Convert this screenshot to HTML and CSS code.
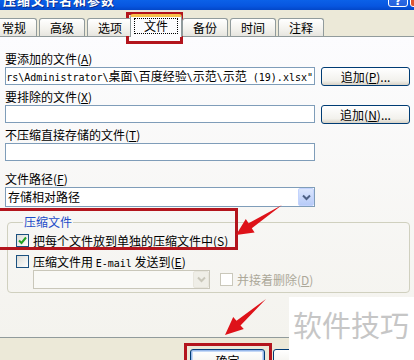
FILE: index.html
```html
<!DOCTYPE html>
<html lang="zh-CN">
<head>
<meta charset="utf-8">
<link rel="stylesheet" href="styles.css">
</head>
<body>
<div class="window">
  <div class="titlebar">
    <span class="title">压缩文件名和参数</span>
    <span class="tb-btns"><span class="tb-help">?</span><span class="tb-close"></span></span>
  </div>
  <div class="tabrow">
    <div class="tab">常规</div>
    <div class="tab">高级</div>
    <div class="tab">选项</div>
    <div class="tab active"><span class="focus">文件</span></div>
    <div class="tab">备份</div>
    <div class="tab">时间</div>
    <div class="tab">注释</div>
  </div>
  <div class="panel">
    <div class="field">
      <div class="label">要添加的文件(<u>A</u>)</div>
      <div class="row">
        <div class="input path"><span class="path-text"><span class="mono">ers\Administrator\</span>桌面<span class="mono">\</span>百度经验<span class="mono">\</span>示范<span class="mono">\</span>示范<span class="mono"> (19).xlsx"</span></span></div>
        <button class="btn">追加(<u>P</u>)...</button>
      </div>
    </div>
    <div class="field">
      <div class="label">要排除的文件(<u>X</u>)</div>
      <div class="row">
        <div class="input"></div>
        <button class="btn">追加(<u>N</u>)...</button>
      </div>
    </div>
    <div class="field wide">
      <div class="label">不压缩直接存储的文件(<u>T</u>)</div>
      <div class="row">
        <div class="input"></div>
      </div>
    </div>
    <div class="field last">
      <div class="label">文件路径(<u>F</u>)</div>
      <div class="select">
        <span class="select-text">存储相对路径</span>
        <span class="dd"><svg width="9" height="7" viewBox="0 0 9 7"><polyline points="1,1.5 4.5,5 8,1.5" fill="none" stroke="#4d6185" stroke-width="2"/></svg></span>
      </div>
    </div>
    <fieldset class="group">
      <legend>压缩文件</legend>
      <div class="cb-row">
        <span class="cb"><svg width="9" height="9" viewBox="0 0 9 9"><polyline points="1,4.5 3.5,7 8,1.5" fill="none" stroke="#21a121" stroke-width="2"/></svg></span>
        <span>把每个文件放到单独的压缩文件中(<u>S</u>)</span>
      </div>
      <div class="cb-row">
        <span class="cb"></span>
        <span>压缩文件用 <span class="mono">E-mail</span> 发送到(<u>E</u>)</span>
      </div>
      <div class="row3">
        <div class="select disabled">
          <span class="select-text"></span>
          <span class="dd"><svg width="9" height="7" viewBox="0 0 9 7"><polyline points="1,1.5 4.5,5 8,1.5" fill="none" stroke="#c9c7ba" stroke-width="2"/></svg></span>
        </div>
        <span class="cb off"></span>
        <span class="dis-text">并接着删除(<u>D</u>)</span>
      </div>
    </fieldset>
  </div>
  <div class="footer">
    <button class="btn big default">确定</button>
    <button class="btn big">取消</button>
    <button class="btn big">帮助</button>
  </div>
</div>

<div class="watermark">软件技巧</div>
<div class="mark mark-tab"></div>
<div class="mark mark-check"></div>
<div class="mark mark-ok"></div>
<svg class="arrows" width="414" height="360" viewBox="0 0 414 360">
  <polygon points="236,235 245.8,219 248.6,223.2 282,205 251.8,228.2 254.6,232.4" fill="#de1219"/>
  <polygon points="225,335 233.2,317.1 236.5,320.8 266,299 240.5,325.4 243.8,329.1" fill="#de1219"/>
</svg>
</body>
</html>
```

FILE: styles.css
```css
* { box-sizing: border-box; }

body {
  margin: 0;
  width: 414px;
  height: 360px;
  overflow: hidden;
  position: relative;
  background: #ece9d8;
  font-family: "Noto Sans CJK SC", sans-serif;
  font-size: 12px;
  color: #000;
}

/* title bar */
.titlebar {
  height: 10px;
  display: flex;
  align-items: flex-end;
  overflow: hidden;
  background: linear-gradient(#0b61e8, #0756e0 60%, #0347c8);
}
.title {
  color: #fff;
  font-weight: bold;
  font-size: 13px;
  letter-spacing: 1px;
  line-height: 14px;
  margin: 0 0 3px 3px;
  text-shadow: 1px 1px 0 #0b2d8a;
  white-space: nowrap;
}
.tb-btns {
  margin-left: auto;
  margin-right: -17px;
  margin-bottom: 3px;
  display: flex;
  align-items: flex-end;
  gap: 2px;
}
.tb-help {
  width: 20px;
  height: 20px;
  border: 1px solid #fff;
  border-radius: 3px;
  background: linear-gradient(#3c80f4, #2460dc);
  color: #fff;
  font: bold 12px "DejaVu Sans", sans-serif;
  line-height: 26px;
  text-align: center;
}
.tb-close {
  width: 21px;
  height: 20px;
  border: 1px solid #fff;
  border-radius: 3px;
  background: #e0562f;
}

/* tabs */
.tabrow {
  height: 26px;
  display: flex;
  align-items: flex-end;
  gap: 2px;
  margin-left: -9px;
  position: relative;
  z-index: 1;
}
.tab {
  width: 46px;
  height: 18px;
  flex: none;
  border: 1px solid #919b9c;
  border-bottom: 0;
  border-radius: 3px 3px 0 0;
  background: linear-gradient(#fff, #f3f2ed 60%, #e6e5df);
  text-align: center;
  line-height: 17px;
}
.tab.active {
  width: 52px;
  height: 23px;
  margin: 0 -2px -1px -5px;
  border-top: 3px solid #f9c34a;
  background: #fcfcfe;
  padding-top: 1px;
  line-height: 14px;
}
.focus {
  display: inline-block;
  border: 1px dotted #000;
  padding: 0 9px;
  line-height: 14px;
}

/* panel */
.panel {
  height: 302px;
  border-top: 1px solid #919b9c;
  border-bottom: 1px solid #919b9c;
  background: linear-gradient(#fcfcfe, #f4f3ee);
  padding: 15px 4px 0 5px;
}
.field { margin-bottom: 4px; }
.field.wide { margin-bottom: 11px; }
.field.last { margin-bottom: 0; }
.label {
  line-height: 14px;
  margin-bottom: 1px;
  white-space: nowrap;
}
.row {
  display: flex;
  gap: 6px;
  align-items: flex-start;
}
.input {
  width: 310px;
  height: 18px;
  flex: none;
  border: 1px solid #7f9db9;
  background: #fff;
}
.path {
  display: flex;
  justify-content: flex-end;
  overflow: hidden;
  padding-right: 1px;
  line-height: 16px;
  white-space: nowrap;
}
.path-text { flex: none; }
.mono {
  font-family: "DejaVu Sans Mono", monospace;
  font-size: 10px;
}
.btn {
  width: 89px;
  height: 19px;
  flex: none;
  border: 1px solid #003c74;
  border-radius: 3px;
  background: linear-gradient(#fff, #f2f1ec 75%, #d8d2c6);
  font-family: "Noto Sans CJK SC", sans-serif;
  font-size: 12px;
  line-height: 16px;
  padding: 0;
  color: #000;
}

.select {
  width: 310px;
  height: 20px;
  border: 1px solid #7f9db9;
  background: #fff;
  display: flex;
  align-items: center;
  padding: 0 0 0 2px;
}
.select-text {
  flex: 1;
  line-height: 18px;
}
.dd {
  width: 16px;
  height: 18px;
  flex: none;
  border: 1px solid #c3d3fd;
  border-radius: 2px;
  background: linear-gradient(#dbe6fd, #b7cbf8);
  display: flex;
  align-items: center;
  justify-content: center;
}

/* group box */
.group {
  margin: 8px 0 0 2px;
  padding: 3px 0 3px 8px;
  border: 1px solid #d0d0bf;
  border-radius: 4px;
  min-width: 0;
}
.group legend {
  padding: 0 1px;
  margin-left: 7px;
  line-height: 14px;
  color: #1c4cc8;
}
.cb-row {
  display: flex;
  align-items: center;
  height: 16px;
  white-space: nowrap;
}
.cb-row + .cb-row { margin-top: 5px; }
.cb {
  width: 13px;
  height: 13px;
  flex: none;
  margin-right: 4px;
  border: 1px solid #1c5180;
  background: linear-gradient(135deg, #dcdcd7, #fff);
  display: flex;
  align-items: center;
  justify-content: center;
}
.row3 {
  display: flex;
  align-items: center;
  margin-top: 1px;
}
.select.disabled {
  width: 177px;
  height: 19px;
  margin-left: 17px;
  border-color: #c9c7ba;
  background: #f9f9f6;
}
.select.disabled .dd {
  height: 17px;
  border-color: #e8e6dd;
  background: #efeee7;
}
.cb.off {
  margin-left: 10px;
  border-color: #cac8bb;
  background: #fff;
}
.dis-text {
  color: #aca899;
  white-space: nowrap;
}

/* footer */
.footer {
  height: 22px;
  padding: 11px 0 0 190px;
  display: flex;
  gap: 8px;
}
.btn.big {
  width: 75px;
  height: 23px;
}
.btn.default {
  box-shadow: inset 0 0 0 1px #98b8ea, inset 0 0 0 2px #c4d8f6;
}

/* annotations */
.watermark {
  position: absolute;
  left: 289px;
  top: 297px;
  width: 125px;
  height: 63px;
  background: #fff;
  color: #c6c6c6;
  font-size: 29px;
  line-height: 29px;
  padding: 13px 0 0 4px;
  white-space: nowrap;
}
.mark {
  position: absolute;
  border: 3px solid #b3151d;
}
.mark-tab { left: 126px; top: 12px; width: 57px; height: 32px; }
.mark-check { left: -5px; top: 208px; width: 243px; height: 42px; }
.mark-ok { left: 184px; top: 343px; width: 88px; height: 25px; }
.arrows {
  position: absolute;
  left: 0;
  top: 0;
}
```
